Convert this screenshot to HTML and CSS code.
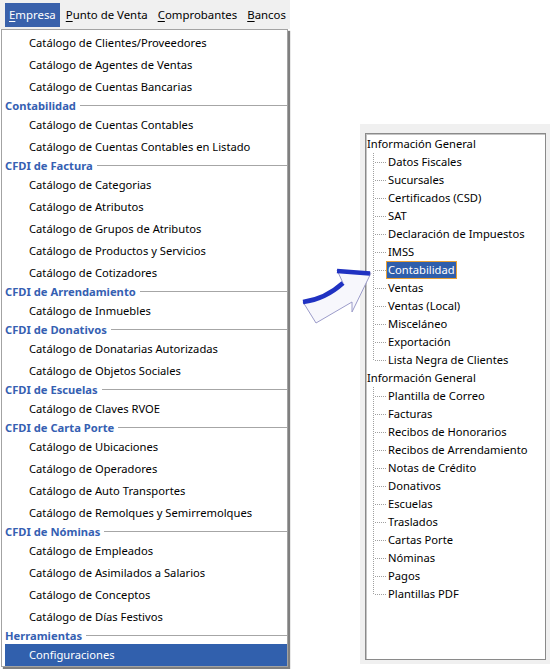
FILE: index.html
```html
<!DOCTYPE html>
<html lang="es">
<head>
<meta charset="utf-8">
<title>Menú Empresa</title>
<link rel="stylesheet" href="styles.css">
</head>
<body>
<div class="canvas">
  <div class="left">
    <nav class="menubar">
      <span class="mb-item active"><u>E</u>mpresa</span>
      <span class="mb-item"><u>P</u>unto de Venta</span>
      <span class="mb-item"><u>C</u>omprobantes</span>
      <span class="mb-item"><u>B</u>ancos</span>
    </nav>
    <div class="dropdown">
      <div class="item">Catálogo de Clientes/Proveedores</div>
      <div class="item">Catálogo de Agentes de Ventas</div>
      <div class="item">Catálogo de Cuentas Bancarias</div>
      <div class="sep"><span>Contabilidad</span></div>
      <div class="item">Catálogo de Cuentas Contables</div>
      <div class="item">Catálogo de Cuentas Contables en Listado</div>
      <div class="sep"><span>CFDI de Factura</span></div>
      <div class="item">Catálogo de Categorias</div>
      <div class="item">Catálogo de Atributos</div>
      <div class="item">Catálogo de Grupos de Atributos</div>
      <div class="item">Catálogo de Productos y Servicios</div>
      <div class="item">Catálogo de Cotizadores</div>
      <div class="sep"><span>CFDI de Arrendamiento</span></div>
      <div class="item">Catálogo de Inmuebles</div>
      <div class="sep"><span>CFDI de Donativos</span></div>
      <div class="item">Catálogo de Donatarias Autorizadas</div>
      <div class="item">Catálogo de Objetos Sociales</div>
      <div class="sep"><span>CFDI de Escuelas</span></div>
      <div class="item">Catálogo de Claves RVOE</div>
      <div class="sep"><span>CFDI de Carta Porte</span></div>
      <div class="item">Catálogo de Ubicaciones</div>
      <div class="item">Catálogo de Operadores</div>
      <div class="item">Catálogo de Auto Transportes</div>
      <div class="item">Catálogo de Remolques y Semirremolques</div>
      <div class="sep"><span>CFDI de Nóminas</span></div>
      <div class="item">Catálogo de Empleados</div>
      <div class="item">Catálogo de Asimilados a Salarios</div>
      <div class="item">Catálogo de Conceptos</div>
      <div class="item">Catálogo de Días Festivos</div>
      <div class="sep"><span>Herramientas</span></div>
      <div class="item selected">Configuraciones</div>
    </div>
  </div>

  <div class="right">
    <div class="panel">
      <div class="tree">
        <ul class="root">
          <li class="node">Información General
            <ul class="children">
              <li>Datos Fiscales</li>
              <li>Sucursales</li>
              <li>Certificados (CSD)</li>
              <li>SAT</li>
              <li>Declaración de Impuestos</li>
              <li>IMSS</li>
              <li><span class="sel">Contabilidad</span></li>
              <li>Ventas</li>
              <li>Ventas (Local)</li>
              <li>Misceláneo</li>
              <li>Exportación</li>
              <li>Lista Negra de Clientes</li>
            </ul>
          </li>
          <li class="node">Información General
            <ul class="children">
              <li>Plantilla de Correo</li>
              <li>Facturas</li>
              <li>Recibos de Honorarios</li>
              <li>Recibos de Arrendamiento</li>
              <li>Notas de Crédito</li>
              <li>Donativos</li>
              <li>Escuelas</li>
              <li>Traslados</li>
              <li>Cartas Porte</li>
              <li>Nóminas</li>
              <li>Pagos</li>
              <li>Plantillas PDF</li>
            </ul>
          </li>
        </ul>
      </div>
    </div>
  </div>

  <svg class="arrow" viewBox="296 262 80 66" width="80" height="66" aria-hidden="true">
    <path class="arrow-body" d="M303,302 C318,300 332,293 343,283 L337,270 L371,273 L352,312 L352,302 C340,309 328,316 316,323 Z"/>
    <path class="arrow-edge" d="M303,302 C318,300 332,293 343,283"/>
    <path class="arrow-edge" d="M337,271 L370,273.5"/>
  </svg>
</div>
</body>
</html>
```

FILE: styles.css
```css
* { box-sizing: border-box; }

html, body {
  margin: 0;
  padding: 0;
  background: #ffffff;
}

body {
  font-family: "Noto Sans", "Open Sans", sans-serif;
  font-size: 11.2px;
  color: #000000;
}

.canvas {
  position: relative;
  display: flex;
  width: 550px;
  height: 669px;
  overflow: hidden;
}

/* ---------- left: menu ---------- */
.left {
  width: 291px;
  display: flex;
  flex-direction: column;
}

.menubar {
  width: 290px;
  height: 29px;
  background: #f0f0f0;
  display: flex;
  align-items: flex-start;
  gap: 2px;
  padding: 3px 0 0 5px;
  font-size: 11.4px;
  white-space: nowrap;
  overflow: hidden;
}

.mb-item {
  height: 24px;
  line-height: 24px;
  padding: 0 4px;
}

.mb-item u {
  text-underline-offset: 2px;
}

.mb-item.active {
  background: #3961ab;
  color: #ffffff;
}

.dropdown {
  margin-left: 1px;
  width: 287px;
  height: 638px;
  background: #ffffff;
  border: 1px solid #a3a3a3;
  padding: 2px 0 0 3px;
  box-shadow: 2px 2px 1px rgba(0, 0, 0, 0.5);
}

.item {
  height: 22px;
  line-height: 22px;
  padding-left: 24px;
  white-space: nowrap;
}

.item.selected {
  background: #3160ad;
  color: #ffffff;
}

.sep {
  height: 16px;
  padding-bottom: 2px;
  display: flex;
  align-items: center;
  gap: 4px;
  font-weight: bold;
  color: #3560b2;
  white-space: nowrap;
}

.sep::after {
  content: "";
  flex: 1;
  height: 1px;
  background: #a6a6a6;
}

/* ---------- right: tree ---------- */
.right {
  margin-left: auto;
}

.panel {
  margin-top: 124px;
  width: 190px;
  height: 540px;
  background: #f0f0f0;
  padding: 9px 4px 4px 5px;
}

.tree {
  height: 100%;
  background: #ffffff;
  border: 1px solid #8a8a8a;
  box-shadow: inset 1px 1px 0 #c4c4c4;
  padding: 1px 0 0 1px;
  white-space: nowrap;
  overflow: hidden;
}

.tree ul {
  list-style: none;
  margin: 0;
  padding: 0;
}

.node {
  line-height: 18px;
}

.children li {
  position: relative;
  height: 18px;
  line-height: 18px;
  padding-left: 21px;
}

/* vertical dotted connector */
.children li::after {
  content: "";
  position: absolute;
  left: 6px;
  top: 0;
  width: 1px;
  height: 18px;
  background: repeating-linear-gradient(to bottom, #a0a0a0 0 1px, transparent 1px 2px);
}

.children li:last-child::after {
  height: 10px;
}

/* horizontal dotted connector */
.children li::before {
  content: "";
  position: absolute;
  left: 7px;
  top: 9px;
  width: 13px;
  height: 1px;
  background: repeating-linear-gradient(to right, transparent 0 1px, #a0a0a0 1px 2px);
}

.sel {
  display: inline-block;
  line-height: 16px;
  margin-left: -2px;
  padding: 0 1px;
  background: #2f5eab;
  color: #ffffff;
  border: 1px solid #e8a034;
}

/* ---------- arrow overlay ---------- */
.arrow {
  position: absolute;
  left: 296px;
  top: 262px;
}

.arrow-body {
  fill: #f7f7fc;
  stroke: #9c9cca;
  stroke-width: 1;
  stroke-linejoin: miter;
}

.arrow-edge {
  fill: none;
  stroke: #2032c2;
  stroke-width: 4.5;
}
```
